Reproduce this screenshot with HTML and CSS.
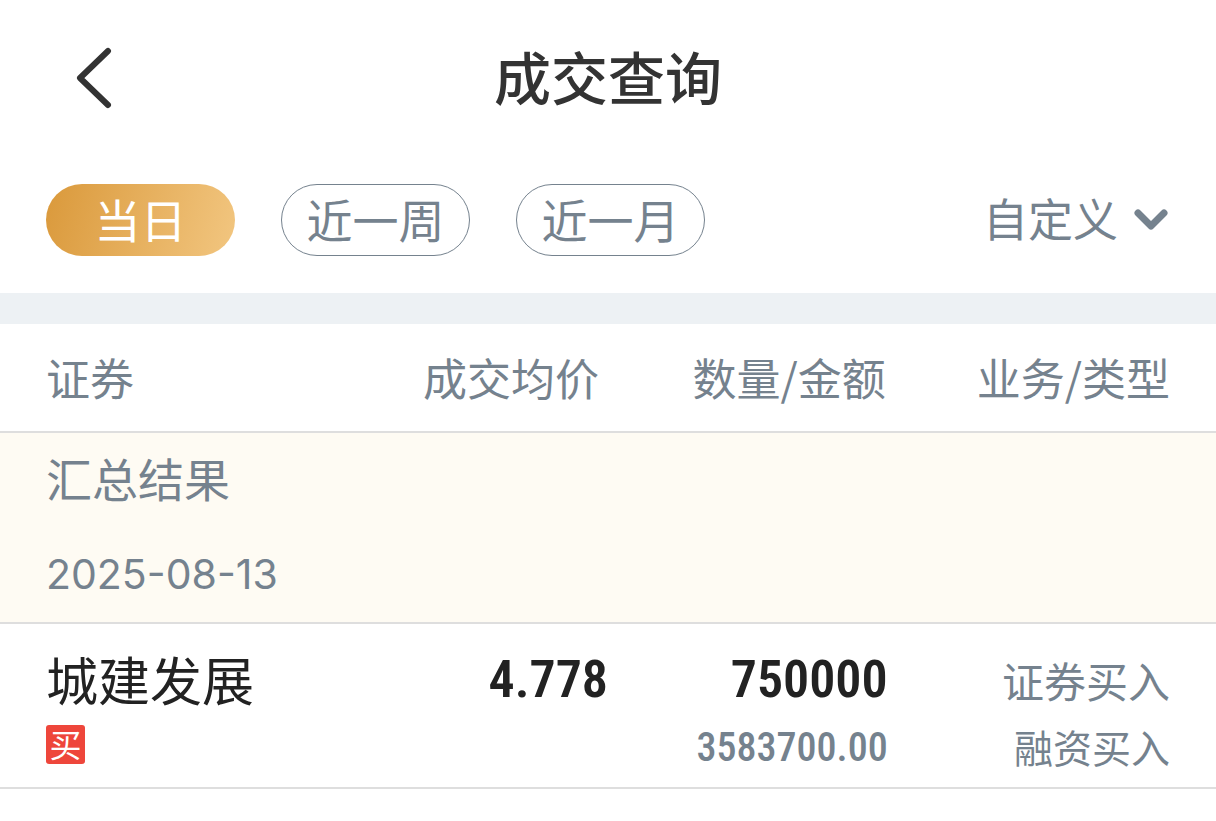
FILE: index.html
```html
<!DOCTYPE html>
<html lang="zh-CN">
<head>
<meta charset="utf-8">
<meta name="viewport" content="width=device-width, initial-scale=1">
<title>成交查询</title>
<link rel="stylesheet" href="styles.css">
</head>
<body>
<header class="topbar">
  <button class="back" type="button" aria-label="返回">
    <svg viewBox="0 0 36 62" width="36" height="62" aria-hidden="true"><path d="M32 4 4 31l28 27"/></svg>
  </button>
  <h1 class="title">成交查询</h1>
</header>
<nav class="filters" aria-label="日期范围">
  <button class="pill pill-active" type="button">当日</button>
  <button class="pill" type="button">近一周</button>
  <button class="pill" type="button">近一月</button>
  <button class="custom" type="button"><span class="custom-label">自定义</span>
    <svg viewBox="0 0 34 22" width="34" height="22" aria-hidden="true"><path d="M4 4l13 13L30 4"/></svg>
  </button>
</nav>
<table class="deals">
  <colgroup><col class="col-name"><col class="col-price"><col class="col-amount"><col class="col-type"></colgroup>
  <thead>
    <tr><th scope="col">证券</th><th scope="col" class="head-price">成交均价</th><th scope="col" class="head-amount">数量/金额</th><th scope="col">业务/类型</th></tr>
  </thead>
  <tbody>
    <tr class="summary"><td colspan="4"><div class="summary-title">汇总结果</div><div class="summary-date">2025-08-13</div></td></tr>
    <tr class="deal">
      <td><div class="stock">城建发展</div><div class="tag">买</div></td>
      <td><div class="num">4.778</div></td>
      <td><div class="num">750000</div><div class="amount">3583700.00</div></td>
      <td><div class="business">证券买入</div><div class="kind">融资买入</div></td>
    </tr>
  </tbody>
</table>
</body>
</html>
```

FILE: styles.css
```css
* { box-sizing: border-box; }
body {
  margin: 0;
  background: #fff;
  color: #75828e;
  font-family: "Noto Sans CJK SC", sans-serif;
}
button {
  padding: 0;
  border: 0;
  background: none;
  color: inherit;
  font-family: inherit;
}
svg {
  display: block;
  fill: none;
  stroke: currentColor;
  stroke-linecap: round;
  stroke-linejoin: round;
}
.topbar {
  display: grid;
  grid-template-columns: 80px 1fr 80px;
  align-items: center;
  height: 156px;
  padding: 0 46px;
  color: #333;
}
.back { padding-left: 30px; }
.back svg { stroke-width: 6; }
.title {
  margin: 0;
  padding-bottom: 6px;
  font-size: 57px;
  font-weight: 500;
  line-height: 80px;
  text-align: center;
}
.filters {
  display: flex;
  align-items: center;
  gap: 46px;
  padding: 28px 46px 37px;
  border-bottom: 31px solid #edf1f4;
}
.pill {
  width: 189px;
  height: 72px;
  padding-bottom: 4px;
  border: 1px solid #75828e;
  border-radius: 36px;
  font-size: 46px;
  line-height: 66px;
}
.pill-active {
  border: 0;
  background: linear-gradient(105deg, #da993b, #f2c680);
  color: #fff;
}
.custom {
  display: flex;
  align-items: center;
  gap: 16px;
  margin-left: auto;
  padding-right: 2px;
  font-size: 45px;
  line-height: 68px;
}
.custom-label { padding-bottom: 4px; }
.custom svg { stroke-width: 7; }
.deals {
  width: 100%;
  table-layout: fixed;
  border-collapse: collapse;
}
.col-name { width: 27%; }
.col-price { width: 23%; }
.col-amount { width: 23%; }
.col-type { width: 27%; }
th, td { padding: 0; text-align: right; vertical-align: top; }
th {
  height: 108px;
  border-bottom: 2px solid #dedede;
  font-size: 44px;
  font-weight: 400;
  line-height: 106px;
}
th:first-child, td:first-child { padding-left: 46px; text-align: left; }
th:last-child, td:last-child { padding-right: 46px; }
.deals .head-price { padding-right: 9px; }
.deals .head-amount { padding-right: 2px; }
.summary td {
  padding-top: 9px;
  padding-bottom: 12px;
  border-bottom: 2px solid #dedede;
  background: #fefbf3;
}
.summary-title { font-size: 46px; line-height: 70px; }
.summary-date {
  margin-top: 26px;
  font-family: Inter, sans-serif;
  font-size: 41px;
  line-height: 72px;
}
.deal td { padding-top: 18px; padding-bottom: 9px; border-bottom: 2px solid #dedede; }
.stock { color: #222; font-size: 52px; line-height: 74px; }
.num {
  color: #222;
  font-family: "Roboto Condensed", Roboto, sans-serif;
  font-size: 52px;
  font-weight: 600;
  line-height: 76px;
}
.tag {
  width: 39px;
  height: 39px;
  margin-top: 9px;
  border-radius: 3px;
  background: #ee463b;
  color: #fff;
  font-size: 32px;
  line-height: 36px;
  text-align: center;
}
.amount {
  font-family: "Roboto Condensed", Roboto, sans-serif;
  font-size: 40px;
  font-weight: 500;
  line-height: 60px;
}
.business { font-size: 42px; line-height: 75px; }
.kind { font-size: 39px; line-height: 58px; }
```
